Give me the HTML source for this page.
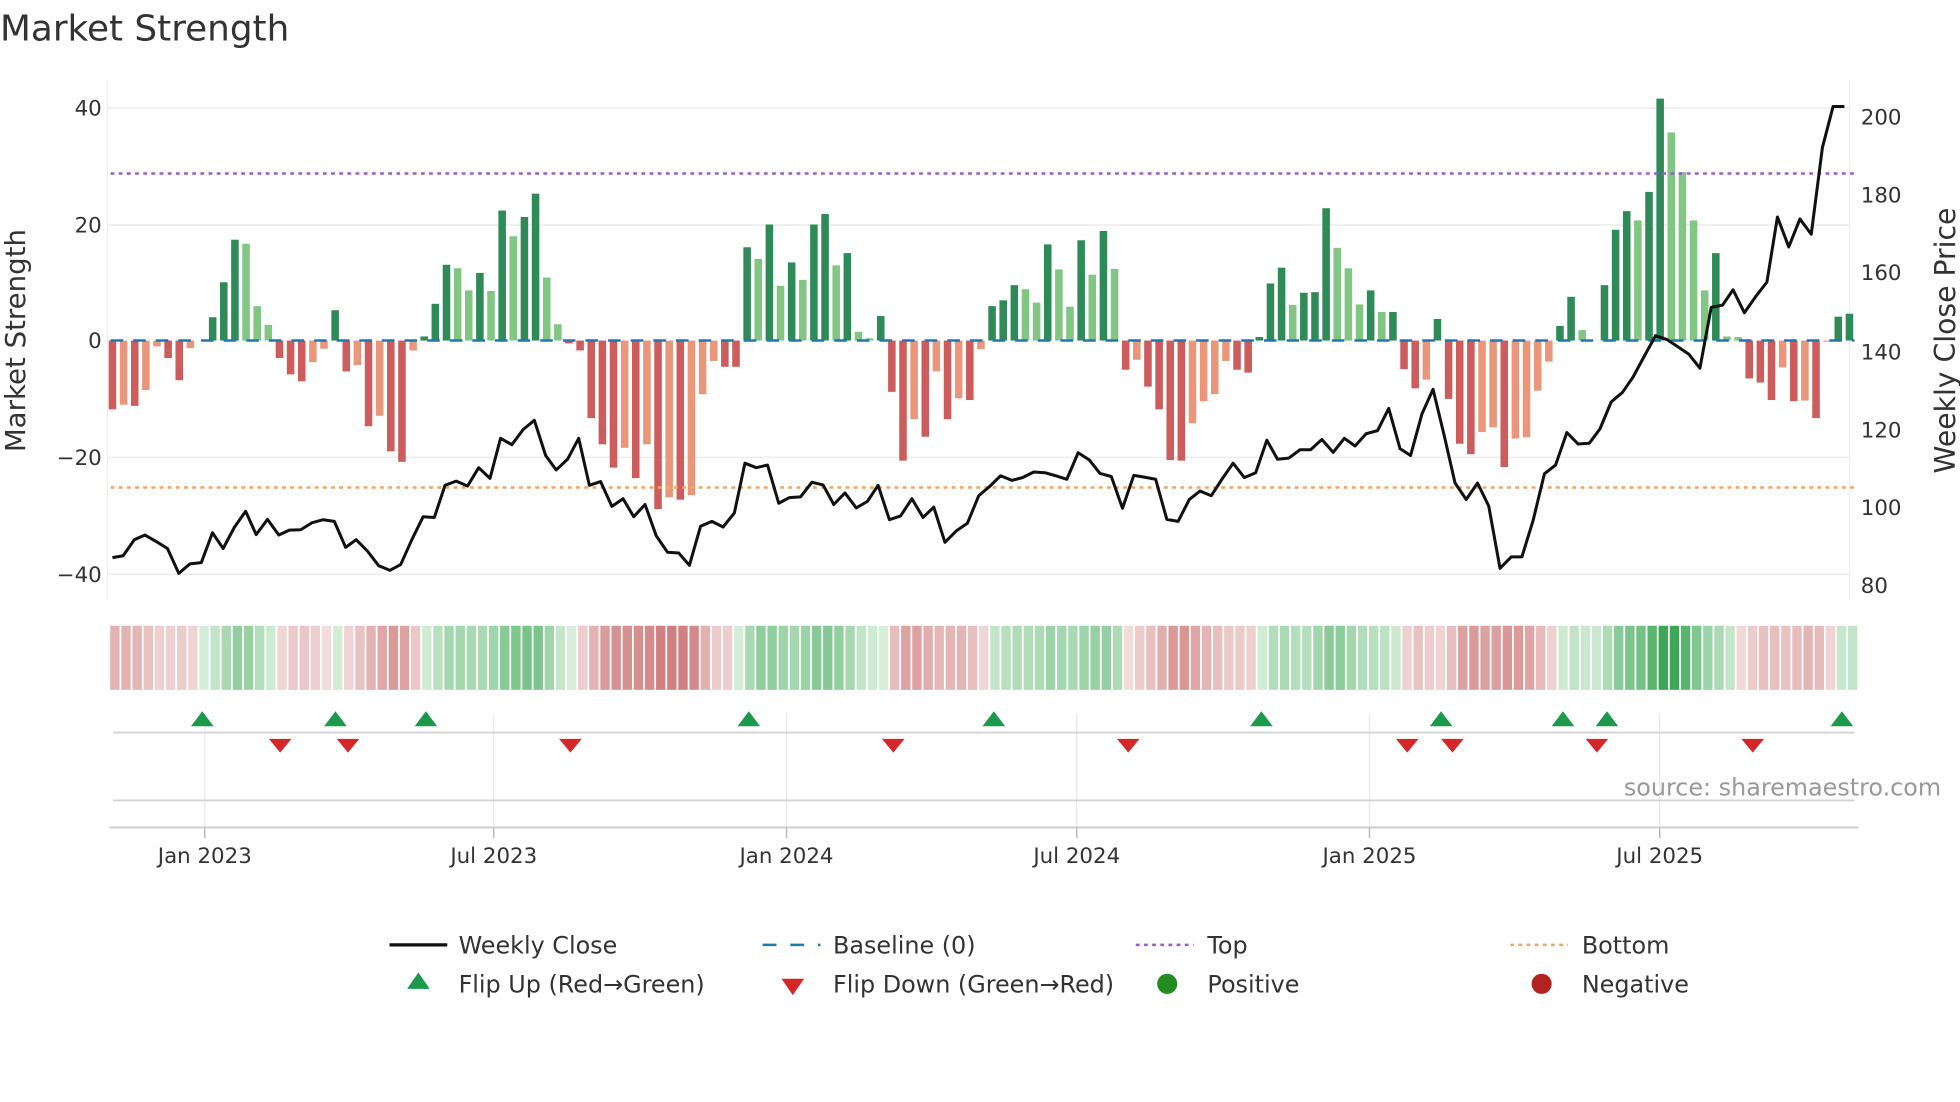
<!DOCTYPE html>
<html><head><meta charset="utf-8"><style>
html,body{margin:0;padding:0;background:#fff;width:1960px;height:1102px;overflow:hidden}
svg{display:block}
text{font-family:"DejaVu Sans","Liberation Sans",sans-serif;fill:#333}
</style></head><body>
<svg id="s" width="1960" height="1102" viewBox="0 0 1560 877" xmlns="http://www.w3.org/2000/svg">
<text x="0" y="32" font-size="28.5">Market Strength</text>
<g stroke="#ececec" stroke-width="1.2">
<line x1="86" y1="86" x2="1472" y2="86"/><line x1="86" y1="179" x2="1472" y2="179"/>
<line x1="86" y1="364" x2="1472" y2="364"/><line x1="86" y1="457" x2="1472" y2="457"/>
</g>
<line x1="85.5" y1="64" x2="85.5" y2="478" stroke="#eee" stroke-width="1"/>
<line x1="1472" y1="64" x2="1472" y2="478" stroke="#eee" stroke-width="1"/>
<g font-size="17" text-anchor="end">
<text x="81" y="92">40</text><text x="81" y="185">20</text><text x="81" y="277">0</text>
<text x="81" y="370">−20</text><text x="81" y="463">−40</text>
</g>
<g font-size="17">
<text x="1481" y="99">200</text><text x="1481" y="161">180</text><text x="1481" y="223">160</text>
<text x="1481" y="286">140</text><text x="1481" y="348">120</text><text x="1481" y="410">100</text><text x="1481" y="472">80</text>
</g>
<text transform="translate(20,271) rotate(-90)" font-size="22" text-anchor="middle">Market Strength</text>
<text transform="translate(1556,271) rotate(-90)" font-size="22.5" text-anchor="middle">Weekly Close Price</text>
<g id="bars"></g>
<line x1="88" y1="271" x2="1476" y2="271" stroke="#1f77b4" stroke-width="2" stroke-dasharray="10,8"/>
<line x1="88" y1="138" x2="1476" y2="138" stroke="#9b59d6" stroke-width="2" stroke-dasharray="3,3.5"/>
<line x1="88" y1="388" x2="1476" y2="388" stroke="#f4a460" stroke-width="2" stroke-dasharray="3,3.5"/>
<polyline id="price" fill="none" stroke="#111" stroke-width="2.4" stroke-linejoin="round"/>
<g id="strip"></g>
<g stroke="#e8e8e8" stroke-width="1">
<line x1="163" y1="568" x2="163" y2="658"/><line x1="393" y1="568" x2="393" y2="658"/>
<line x1="626" y1="568" x2="626" y2="658"/><line x1="857" y1="568" x2="857" y2="658"/>
<line x1="1090" y1="568" x2="1090" y2="658"/><line x1="1321" y1="568" x2="1321" y2="658"/>
</g>
<line x1="90" y1="583" x2="1476" y2="583" stroke="#d4d4d4" stroke-width="1.5"/>
<line x1="90" y1="637" x2="1476" y2="637" stroke="#d4d4d4" stroke-width="1.5"/>
<line x1="87" y1="658.5" x2="1479" y2="658.5" stroke="#ccc" stroke-width="1.5"/>
<g stroke="#bbb" stroke-width="1.2">
<line x1="163" y1="659" x2="163" y2="667"/><line x1="393" y1="659" x2="393" y2="667"/>
<line x1="626" y1="659" x2="626" y2="667"/><line x1="857" y1="659" x2="857" y2="667"/>
<line x1="1090" y1="659" x2="1090" y2="667"/><line x1="1321" y1="659" x2="1321" y2="667"/>
</g>
<g id="flips"></g>
<g font-size="17" text-anchor="middle">
<text x="163" y="687">Jan 2023</text><text x="393" y="687">Jul 2023</text>
<text x="626" y="687">Jan 2024</text><text x="857" y="687">Jul 2024</text>
<text x="1090" y="687">Jan 2025</text><text x="1321" y="687">Jul 2025</text>
</g>
<text x="1545" y="633" font-size="19" text-anchor="end" style="fill:#999">source: sharemaestro.com</text>
<g font-size="19">
<line x1="310" y1="752" x2="356" y2="752" stroke="#111" stroke-width="2.6"/>
<text x="365" y="759">Weekly Close</text>
<line x1="607" y1="752" x2="653" y2="752" stroke="#1f77b4" stroke-width="2" stroke-dasharray="11,11"/>
<text x="663" y="759">Baseline (0)</text>
<line x1="904" y1="752" x2="950" y2="752" stroke="#9b59d6" stroke-width="2" stroke-dasharray="3,3.5"/>
<text x="961" y="759">Top</text>
<line x1="1202" y1="752" x2="1248" y2="752" stroke="#f4a460" stroke-width="2" stroke-dasharray="3,3.5"/>
<text x="1259" y="759">Bottom</text>
<polygon points="333,774 342,787 324,787" fill="#1a9a4a"/>
<text x="365" y="790">Flip Up (Red→Green)</text>
<polygon points="622,779 640,779 631,792" fill="#d62728"/>
<text x="663" y="790">Flip Down (Green→Red)</text>
<circle cx="929" cy="783" r="8" fill="#228b22"/>
<text x="961" y="790">Positive</text>
<circle cx="1227" cy="783" r="8" fill="#b22222"/>
<text x="1259" y="790">Negative</text>
</g>
</svg>
<script>
var NS="http://www.w3.org/2000/svg";
function el(t,a,p){var e=document.createElementNS(NS,t);for(var k in a)e.setAttribute(k,a[k]);p.appendChild(e);return e;}
var V=[-11.8,-11,-11.2,-8.5,-1,-3,-6.8,-1.3,0,4,10,17.3,16.6,5.9,2.7,-3,-5.8,-7,-3.7,-1.4,5.2,-5.3,-4.2,-14.7,-12.9,-19,-20.8,-1.7,0.7,6.3,13,12.4,8.6,11.6,8.5,22.3,17.9,21.2,25.2,10.8,2.8,-0.5,-1.7,-13.3,-17.8,-21.8,-18.4,-23.6,-17.8,-28.9,-26.9,-27.3,-26.5,-9.2,-3.5,-4.5,-4.5,16,14,19.9,9.4,13.4,10.4,19.9,21.7,12.9,15,1.5,0.4,4.2,-8.8,-20.6,-13.5,-16.5,-5.3,-13.5,-9.9,-10.2,-1.5,
5.9,6.9,9.5,8.8,6.5,16.5,12.2,5.8,17.2,11.3,18.8,12.3,-5,-3.3,-7.9,-11.8,-20.5,-20.6,-14.2,-10.4,-9.2,-3.5,-5,-5.5,0.6,9.8,12.5,6.1,8.2,8.3,22.7,15.9,12.4,6.2,8.6,4.9,4.9,-4.9,-8.2,-6.7,3.7,-10,-17.7,-19.5,-15.7,-14.9,-21.7,-16.8,-16.6,-8.6,-3.6,2.5,7.5,1.8,0,9.5,19,22.2,20.6,25.5,41.5,35.7,28.9,20.6,8.6,15,0.7,0.6,-6.5,-7.2,-10.2,-4.6,-10.4,-10.3,-13.3,-0.2,4.1,4.6];
var N=V.length,x0=89.5,x1=1472,st=(x1-x0)/(N-1);
var bars=document.getElementById("bars");
for(var i=0;i<N;i++){var v=V[i],p=i?V[i-1]:0,x=x0+i*st,c;
 if(v>=0)c=(v>=p)?"#2e8b57":"#82c683";else c=(v<=p)?"#cd5c5c":"#e9967a";
 var h=Math.abs(v)*4.64;if(h<0.3)continue;
 el("rect",{x:x-3,y:v>=0?271-h:271,width:6,height:h,fill:c},bars);}
function mix(a,b,t){var r=[];for(var k=0;k<3;k++)r.push(Math.round(a[k]+(b[k]-a[k])*t));return"rgb("+r+")";}
var strip=document.getElementById("strip"),sw=(1479-87)/N;
for(var i=0;i<N;i++){var a=V[Math.max(0,i-1)],b=V[i],d=V[Math.min(N-1,i+1)],m=(a+2*b+d)/4,c;
 if(m<0){c=mix([243,221,221],[208,128,128],Math.min(1,-m/25));}else{c=mix([214,238,218],[60,168,85],Math.min(1,m/35));}
 el("rect",{x:87+i*sw+0.7,y:498,width:sw-1.4,height:51,fill:c},strip);}
var P1=[180,1457,197,1452,215,1410,232,1398,250,1415,268,1433,286,1498,304,1473,322,1470,340,1392,357,1433,375,1378,393,1336,410,1397,428,1357,446,1398,463,1385,481,1384,499,1366,517,1358,535,1362,553,1430,570,1410,588,1440,606,1478,624,1490,641,1475,659,1410,677,1350,695,1352,712,1268,730,1257,748,1270,766,1222,784,1250,801,1145,819,1162,837,1122,855,1098,873,1190,890,1228,908,1200,926,1145,943,1268,961,1258,979,1323,997,1303,1014,1350,1032,1318,1050,1400,1068,1443,1086,1445,1103,1477,1121,1375,1139,1362,1157,1377,1175,1340,1192,1210,1210,1222,1228,1215,1246,1315,1263,1300,1281,1298,1299,1260,1317,1267,1334,1318,1352,1288,1370,1327,1388,1310,1405,1268,1423,1358,1441,1348,1459,1303,1477,1352,1494,1325,1512,1417,1530,1387,1548,1367,1566,1295];
var P2=[16,1270,33,1243,51,1255,68,1248,86,1233,104,1235,121,1243,139,1252,157,1183,175,1202,192,1237,210,1245,228,1328,246,1242,264,1247,281,1252,299,1357,317,1362,335,1305,352,1283,370,1295,388,1250,405,1210,423,1248,441,1235,459,1150,476,1200,494,1197,512,1175,529,1175,547,1148,565,1182,583,1145,600,1165,618,1133,636,1125,654,1067,672,1172,689,1190,707,1082,725,1017,743,1140,760,1262,778,1305,796,1262,814,1322,832,1485,850,1455,867,1455,885,1360,903,1238,921,1215,939,1130,957,1160,975,1158,992,1120,1010,1050,1028,1025,1045,985,1063,930,1081,877,1099,887,1116,905,1134,925,1152,962,1170,803,1188,797,1205,757,1223,817,1241,775,1259,737,1276,567,1294,645,1312,572,1330,612,1348,385,1365,278,1383,278];
var pts=[];for(var i=0;i<P1.length;i+=2)pts.push((P1[i]/2.0103).toFixed(1)+","+(P1[i+1]/3.283).toFixed(1));
for(var i=0;i<P2.length;i+=2)pts.push((780+P2[i]/2.0103).toFixed(1)+","+(P2[i+1]/3.283).toFixed(1));
document.getElementById("price").setAttribute("points",pts.join(" "));
var fl=document.getElementById("flips");
[161,267,339,596,791,1004,1147,1244,1279,1466].forEach(function(x){el("polygon",{points:x+",566 "+(x+9)+",578 "+(x-9)+",578",fill:"#1a9a4a"},fl);});
[223,277,454,711,898,1120,1156,1271,1395].forEach(function(x){el("polygon",{points:(x-9)+",588 "+(x+9)+",588 "+x+",599",fill:"#d62728"},fl);});
</script>
</body></html>
